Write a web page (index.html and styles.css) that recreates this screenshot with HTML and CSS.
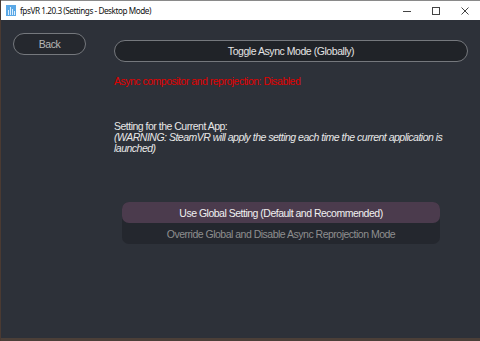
FILE: index.html
```html
<!DOCTYPE html>
<html lang="en">
<head>
    <meta charset="UTF-8">
    <title>fpsVR 1.20.3 (Settings - Desktop Mode)</title>
    <link rel="stylesheet" href="styles.css">
</head>
<body>
<div class="window">
    <div class="titlebar">
        <svg class="app-icon" width="10" height="11" viewBox="0 0 10 11">
            <rect x="0" y="0" width="10" height="11" fill="#5aa8e6"/>
            <rect x="2" y="5" width="1" height="5" fill="#dcefff"/>
            <rect x="4" y="2" width="1" height="8" fill="#dcefff"/>
            <rect x="6" y="4" width="1" height="6" fill="#dcefff"/>
            <rect x="8" y="6" width="1" height="4" fill="#dcefff"/>
        </svg>
        <span class="title">fpsVR 1.20.3 (Settings - Desktop Mode)</span>
        <div class="controls">
            <svg width="8" height="8" viewBox="0 0 8 8"><line x1="0" y1="4.5" x2="8" y2="4.5" stroke="#444" stroke-width="1"/></svg>
            <svg width="8" height="8" viewBox="0 0 8 8"><rect x="0.5" y="0.5" width="7" height="7" fill="none" stroke="#444" stroke-width="1"/></svg>
            <svg width="8" height="8" viewBox="0 0 8 8"><path d="M0.5 0.5 L7.5 7.5 M7.5 0.5 L0.5 7.5" stroke="#444" stroke-width="1"/></svg>
        </div>
    </div>

    <div class="content">
        <div class="side">
            <button class="pill back">Back</button>
        </div>
        <div class="main">
            <button class="pill toggle">Toggle Async Mode (Globally)</button>
            <p class="status">Async compositor and reprojection: Disabled</p>
            <p class="app-setting">
                Setting for the Current App:<br>
                <em>(WARNING: SteamVR will apply the setting each time the current application is launched)</em>
            </p>
            <div class="options">
                <div class="option selected">Use Global Setting (Default and Recommended)</div>
                <div class="option">Override Global and Disable Async Reprojection Mode</div>
            </div>
        </div>
    </div>
    <div class="desktop-strip"></div>
</div>
</body>
</html>
```

FILE: styles.css
```css
body {
    margin: 0;
    background: #2d3139;
    font-family: "Liberation Sans", Arial, sans-serif;
    overflow: hidden;
}

.window {
    height: 341px;
    display: flex;
    flex-direction: column;
    border-left: 1px solid #4a3a32;
    box-sizing: border-box;
}

/* Title bar */
.titlebar {
    height: 20px;
    flex-shrink: 0;
    background: #fff;
    border-top: 1px solid #8a8a8a;
    box-sizing: border-box;
    display: flex;
    align-items: center;
    padding-left: 5px;
}

.app-icon {
    margin-right: 4px;
}

.title {
    font-family: "Noto Sans", sans-serif;
    font-size: 8.2px;
    letter-spacing: -0.45px;
    color: #111;
}

.controls {
    margin-left: auto;
    display: flex;
    gap: 21px;
    padding-right: 11px;
}

/* Content */
.content {
    flex: 1;
    display: flex;
}

.side {
    width: 113px;
    padding: 13px 0 0 12px;
    box-sizing: border-box;
}

.pill {
    display: block;
    background: #25282e;
    border: 1px solid #75787d;
    border-radius: 12px;
    font-family: "Liberation Sans", Arial, sans-serif;
    font-size: 10.5px;
    letter-spacing: -0.45px;
    height: 22px;
    padding: 0;
}

.back {
    width: 73px;
    color: #b8b8b8;
}

.main {
    width: 354px;
    padding-top: 20px;
    font-size: 10.5px;
    letter-spacing: -0.5px;
}

.toggle {
    width: 354px;
    color: #e4e4e4;
    background: #202328;
}

.status {
    margin: 13px 0 0;
    color: #e00000;
}

.app-setting {
    margin: 34px 0 0;
    color: #e8e8e8;
    line-height: 11px;
}

.options {
    margin: 48px 0 0 8px;
    width: 318px;
    background: #24272e;
    border-radius: 7px;
}

.option {
    height: 21px;
    display: flex;
    align-items: center;
    justify-content: center;
    color: #8e8e8e;
}

.option.selected {
    background: #4b3b4d;
    color: #f0f0f0;
    border-radius: 7px;
}

.desktop-strip {
    height: 3px;
    flex-shrink: 0;
    background: #4b3f38;
}
```
